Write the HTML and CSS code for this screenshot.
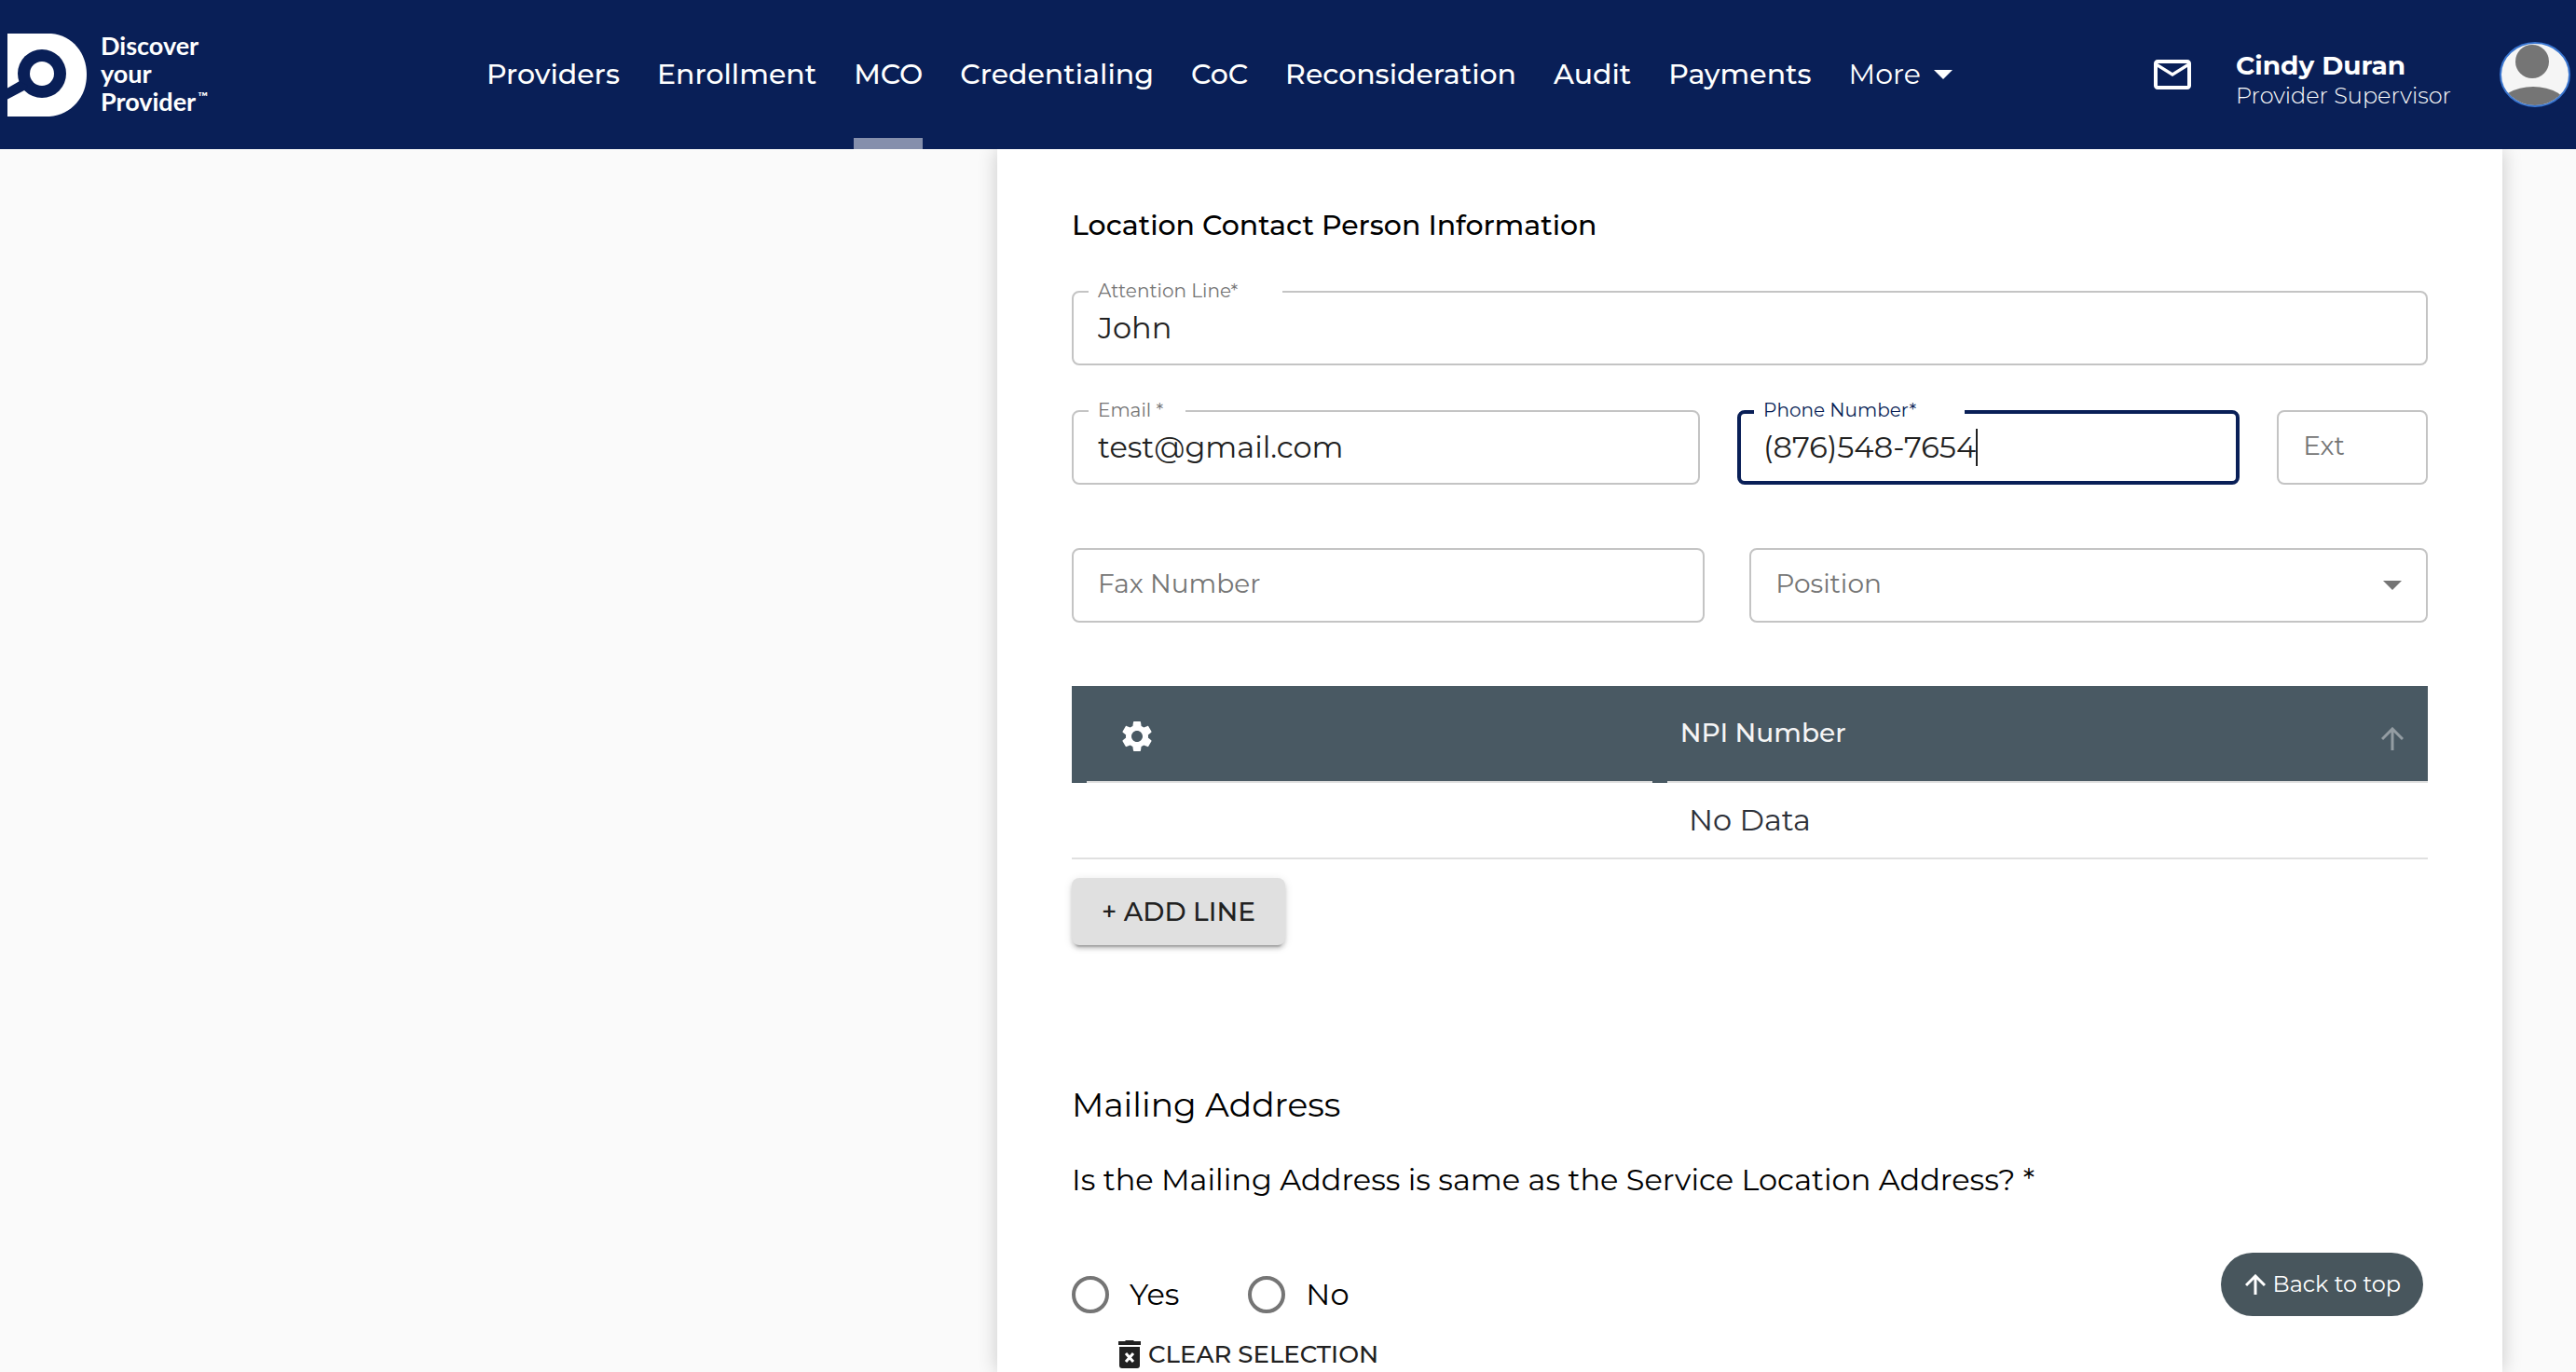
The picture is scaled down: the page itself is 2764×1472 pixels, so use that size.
FILE: index.html
```html
<!DOCTYPE html>
<html lang="en">
<head>
<meta charset="utf-8">
<meta name="viewport" content="width=device-width, initial-scale=1">
<title>Discover your Provider</title>
<link rel="stylesheet" href="styles.css">
</head>
<body>
<header class="topbar">
  <a class="brand" href="#">
    <svg class="brand-mark" viewBox="0 0 86 89" aria-hidden="true">
      <path fill="#fff" d="M0 0H47C70 2 85 21 85 44C85 68 69 87 45 89H0Z"/>
      <circle class="brand-cut" cx="37" cy="43" r="26"/>
      <path class="brand-cut" d="M-1 59L13 51L22 56L18 61L-1 71Z"/>
      <circle cx="37" cy="43" r="13" fill="#fff"/>
    </svg>
    <span class="brand-name">Discover<br>your<br>Provider<sup class="brand-tm">™</sup></span>
  </a>
  <nav class="nav" aria-label="Main">
    <a class="nav-link" href="#">Providers</a>
    <a class="nav-link" href="#">Enrollment</a>
    <a class="nav-link nav-link-active" href="#" aria-current="page">MCO</a>
    <a class="nav-link" href="#">Credentialing</a>
    <a class="nav-link" href="#">CoC</a>
    <a class="nav-link" href="#">Reconsideration</a>
    <a class="nav-link" href="#">Audit</a>
    <a class="nav-link" href="#">Payments</a>
    <button class="nav-more" type="button">More <svg class="caret-down" viewBox="0 0 20 10" aria-hidden="true"><path d="M0 0H20L10 10Z"/></svg></button>
  </nav>
  <div class="user">
    <a class="user-mail" href="#" aria-label="Messages">
      <svg class="mail-icon" viewBox="0 0 24 24" aria-hidden="true"><path d="M22 6c0-1.100-.9-2-2-2H4c-1.100 0-2 .9-2 2v12c0 1.100.9 2 2 2h16c1.100 0 2-.9 2-2V6zm-2 0-8 5-8-5h16zm0 12H4V8l8 5 8-5v10z"/></svg>
    </a>
    <div class="user-text">
      <div class="user-name">Cindy Duran</div>
      <div class="user-role">Provider Supervisor</div>
    </div>
    <svg class="avatar" viewBox="0 0 76 70" role="img" aria-label="Cindy Duran">
      <defs><clipPath id="face"><ellipse cx="38" cy="35" rx="36" ry="33"/></clipPath></defs>
      <ellipse cx="38" cy="35" rx="37" ry="34" fill="#f5f5f5"/>
      <g clip-path="url(#face)" fill="#757575">
        <circle cx="35" cy="21" r="18"/>
        <ellipse cx="36" cy="70" rx="37" ry="22"/>
      </g>
      <ellipse cx="38" cy="35" rx="37" ry="34" fill="none" stroke="#3a76d0" stroke-width="2"/>
    </svg>
  </div>
</header>

<main class="page">
  <form class="card">
    <h2 class="section-title">Location Contact Person Information</h2>

    <div class="row">
      <div class="field">
        <input class="field-input" id="attention" type="text" value="John">
        <label class="float-label" for="attention">Attention Line*</label>
      </div>
    </div>

    <div class="row row-contact">
      <div class="field">
        <input class="field-input" id="email" type="text" value="test@gmail.com">
        <label class="float-label float-label-short" for="email">Email *</label>
      </div>
      <div class="field field-focused">
        <input class="field-input field-input-typing" id="phone" type="text" value="(876)548-7654">
        <span class="text-caret"></span>
        <label class="float-label" for="phone">Phone Number*</label>
      </div>
      <div class="field">
        <input class="field-input" id="ext" type="text">
        <label class="rest-label" for="ext">Ext</label>
      </div>
    </div>

    <div class="row row-fax">
      <div class="field">
        <input class="field-input" id="fax" type="text">
        <label class="rest-label" for="fax">Fax Number</label>
      </div>
      <div class="field">
        <select class="field-input" id="position"><option value=""></option></select>
        <label class="rest-label" for="position">Position</label>
        <svg class="caret-down select-caret" viewBox="0 0 20 10" aria-hidden="true"><path d="M0 0H20L10 10Z"/></svg>
      </div>
    </div>

    <table class="grid">
      <thead>
        <tr>
          <th class="grid-tools" scope="col">
            <button class="icon-button" type="button" aria-label="Table settings">
              <svg class="gear-icon" viewBox="0 0 24 24" aria-hidden="true"><path d="M19.140 12.940c.04-.3.060-.61.060-.94 0-.32-.02-.64-.07-.94l2.030-1.580c.18-.14.230-.41.120-.61l-1.920-3.320c-.12-.22-.37-.29-.59-.22l-2.390.96c-.5-.38-1.030-.7-1.620-.94l-.36-2.540c-.04-.24-.24-.41-.48-.41h-3.840c-.24 0-.43.170-.47.410l-.36 2.540c-.59.240-1.130.570-1.620.940l-2.390-.96c-.22-.08-.47 0-.59.220L2.740 8.870c-.12.210-.08.470.120.610l2.030 1.580c-.05.300-.09.630-.09.940s.020.640.070.940l-2.030 1.580c-.18.140-.23.410-.12.610l1.920 3.320c.120.220.370.290.590.220l2.390-.96c.5.380 1.030.7 1.620.940l.36 2.540c.050.240.240.410.480.410h3.840c.240 0 .44-.17.470-.41l.36-2.540c.590-.24 1.130-.56 1.620-.94l2.390.960c.220.080.470 0 .59-.22l1.920-3.320c.12-.22.070-.47-.12-.61l-2.010-1.580zM12 15.600c-1.980 0-3.600-1.620-3.600-3.600s1.620-3.600 3.600-3.600 3.600 1.620 3.600 3.600-1.620 3.600-3.600 3.600z"/></svg>
            </button>
          </th>
          <th class="grid-npi" scope="col">
            <div class="grid-head">
              <span>NPI Number</span>
              <svg class="sort-icon" viewBox="0 0 24 25" aria-hidden="true"><path d="M12 25V2M1 13L12 2L23 13"/></svg>
            </div>
          </th>
        </tr>
      </thead>
      <tbody>
        <tr><td class="grid-empty" colspan="2">No Data</td></tr>
      </tbody>
    </table>

    <button class="add-line" type="button">+ ADD LINE</button>

    <h2 class="mailing-title">Mailing Address</h2>
    <fieldset class="question">
      <legend class="question-text">Is the Mailing Address is same as the Service Location Address? *</legend>
      <div class="choices">
        <label class="choice"><input class="radio" type="radio" name="same">Yes</label>
        <label class="choice"><input class="radio" type="radio" name="same">No</label>
      </div>
    </fieldset>
    <button class="clear" type="button">
      <svg class="trash-icon" viewBox="0 0 24 30" aria-hidden="true"><path d="M1 7H23V27Q23 30 20 30H4Q1 30 1 27Z"/><path d="M0 1H7L8 0H16L17 1H24V5H0Z"/><path class="trash-cross" d="M8 14L16 23M16 14L8 23"/></svg>
      CLEAR SELECTION
    </button>
  </form>
</main>

<a class="to-top" href="#">
  <svg class="top-icon" viewBox="0 0 22 22" aria-hidden="true"><path d="M11 22V2M1 12L11 2L21 12"/></svg>
  Back to top
</a>
</body>
</html>
```
FILE: styles.css
```css
:root {
  --navy: #091f57;
  --slate: #495963;
  --line: #c4c4c4;
  --rule: #e0e0e0;
}

* { box-sizing: border-box; }

body {
  display: flex;
  flex-direction: column;
  min-height: 100vh;
  margin: 0;
  background: #fafafa;
  color: #000;
  font-family: "Montserrat", "Inter", sans-serif;
  font-size: 32px;
  line-height: 40px;
}

button, input, select { font: inherit; color: inherit; }
button { margin: 0; padding: 0; border: 0; background: none; cursor: pointer; }
a { color: inherit; text-decoration: none; }
svg { display: block; flex: none; }

/* Top bar */
.topbar {
  position: relative;
  z-index: 1;
  display: flex;
  align-items: center;
  height: 160px;
  padding: 0 6px 0 8px;
  background: var(--navy);
  color: #fff;
}
.brand { display: flex; align-items: center; flex: 0 0 514px; gap: 14px; }
.brand-mark { width: 86px; height: 89px; }
.brand-cut { fill: var(--navy); }
.brand-name {
  padding-bottom: 2px;
  font-family: "Lato", sans-serif;
  font-size: 27px;
  font-weight: 700;
  line-height: 30px;
}
.brand-tm { margin-left: 2px; font-size: 14px; line-height: 0; }

.nav { display: flex; align-items: stretch; align-self: stretch; gap: 40px; font-size: 30px; font-weight: 500; }
.nav-link { display: flex; align-items: center; border: solid transparent; border-width: 12px 0; }
.nav-link-active { border-bottom-color: #858fac; }
.nav-more { display: flex; align-items: center; gap: 14px; font-weight: 400; }
.caret-down { width: 20px; height: 10px; fill: currentColor; }

.user { display: flex; align-items: center; margin-left: auto; }
.mail-icon { width: 48px; height: 48px; fill: #fff; }
.user-text { margin: 13px 52px 0 44px; }
.user-name { font-size: 28px; font-weight: 700; line-height: 32px; }
.user-role { font-size: 24px; font-weight: 300; line-height: 34px; }
.avatar { width: 76px; height: 70px; }

/* Form card */
.page {
  display: grid;
  flex: 1;
  grid-template-columns: 1070fr 1615fr 79fr;
}
.card {
  grid-column: 2;
  padding: 62px 80px 0;
  background: #fff;
  box-shadow: 0 0 20px rgba(0, 0, 0, .2);
}
.section-title { margin: 0 0 50px; font-size: 30px; font-weight: 500; }

.row { display: grid; margin-bottom: 48px; }
.row-contact { grid-template-columns: 25fr 20fr 6fr; gap: 40px; margin-bottom: 68px; }
.row-fax { grid-template-columns: 14fr 15fr; gap: 48px; margin-bottom: 68px; }

.field {
  --edge: 2px;
  position: relative;
  display: flex;
  align-items: center;
  min-width: 0;
  height: 80px;
  border: var(--edge) solid var(--line);
  border-radius: 8px;
  color: #212121;
}
.field-focused { --edge: 4px; border-color: var(--navy); }
.field-input {
  width: 100%;
  height: 100%;
  padding: 0 calc(28px - var(--edge)) 2px;
  border: 0;
  outline: 0;
  background: none;
  appearance: none;
}
.field-input-typing { width: auto; padding-right: 0; field-sizing: content; }
.text-caret { width: 2px; height: 40px; background: #212121; }
.float-label {
  position: absolute;
  top: calc(-10px - var(--edge));
  left: calc(18px - var(--edge));
  padding: 0 48px 0 10px;
  background: #fff;
  color: #757575;
  font-size: 20px;
  line-height: 20px;
}
.float-label-short { padding-right: 24px; }
.field-focused .float-label { padding-right: 52px; color: var(--navy); }
.rest-label {
  position: absolute;
  top: 0;
  left: 26px;
  color: #757575;
  font-size: 28px;
  line-height: 72px;
  pointer-events: none;
}
.select-caret { position: absolute; right: 26px; color: #757575; pointer-events: none; }

/* Data grid */
.grid { width: 100%; margin-bottom: 20px; border-spacing: 0; table-layout: fixed; }
.grid th {
  position: relative;
  height: 104px;
  padding: 0;
  background: var(--slate);
  color: #f5f5f5;
  font-size: 28px;
  font-weight: 500;
  text-align: left;
}
.grid th::after {
  content: "";
  position: absolute;
  right: 0;
  bottom: 0;
  left: 16px;
  height: 2px;
  background: var(--rule);
}
.grid .grid-tools { width: 42.8%; padding: 4px 0 0 50px; }
.grid .grid-npi { padding: 0 26px 4px 30px; }
.icon-button { display: block; }
.gear-icon { width: 40px; height: 40px; fill: #fff; }
.grid-head { display: flex; align-items: center; justify-content: space-between; }
.sort-icon { width: 24px; height: 25px; margin-top: 12px; fill: none; stroke: #949da3; stroke-width: 3; }
.grid-empty {
  height: 82px;
  padding: 0;
  border-bottom: 2px solid var(--rule);
  color: #2c3038;
  text-align: center;
}

.add-line {
  display: block;
  height: 72px;
  padding: 0 32px;
  border-radius: 8px;
  background: #e0e0e0;
  box-shadow: 0 6px 2px -4px rgba(0, 0, 0, .2), 0 4px 4px rgba(0, 0, 0, .14), 0 2px 10px rgba(0, 0, 0, .12);
  color: #212121;
  font-size: 28px;
  font-weight: 500;
}

/* Mailing address */
.mailing-title { margin: 147px 0 37px; font-size: 36px; font-weight: 400; line-height: 48px; }
.question { margin: 0; padding: 0; border: 0; }
.question-text { padding: 0; }
.choices { display: flex; gap: 74px; margin-top: 83px; }
.choice { display: flex; align-items: center; gap: 22px; }
.radio {
  width: 40px;
  height: 40px;
  margin: 0;
  border: 4px solid #757575;
  border-radius: 50%;
  appearance: none;
}
.clear {
  display: flex;
  align-items: center;
  gap: 8px;
  margin: 28px 0 0 50px;
  color: #212121;
  font-size: 26px;
  font-weight: 500;
  line-height: 32px;
}
.trash-icon { width: 24px; height: 30px; fill: #212121; }
.trash-cross { stroke: #fff; stroke-width: 3; }

.to-top {
  position: fixed;
  right: 164px;
  bottom: 60px;
  display: flex;
  align-items: center;
  gap: 8px;
  height: 68px;
  padding: 0 24px 0 26px;
  border-radius: 34px;
  background: #48565d;
  color: #fff;
  font-size: 24px;
}
.top-icon { width: 22px; height: 22px; fill: none; stroke: #fff; stroke-width: 3; }
```
